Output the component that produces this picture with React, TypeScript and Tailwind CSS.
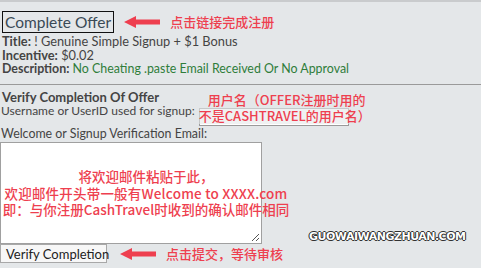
import React from "react";

const Arrow = () => (
  <svg width="38" height="12" viewBox="0 0 38 12" className="block">
    <polygon points="0,6 12,0 12,3.5 36,3.5 36,8.5 12,8.5 12,12" fill="#ee3f4f" />
  </svg>
);

export default function App() {
  const sans = { fontFamily: 'Lato, "Noto Sans", sans-serif' };
  const cjk = { fontFamily: '"Noto Sans CJK SC", "Noto Sans", sans-serif' };
  return (
    <div className="relative w-[481px] h-[268px] overflow-hidden bg-[#e4e7e9] text-[#444]" style={sans}>
      <div className="h-[2px] bg-[#c9cbcd]" />
      <div className="pl-[2px] pt-[9px]">
        <div className="flex items-center">
          <span className="border border-[#111] px-[2px] text-[15.5px] leading-[20px] text-[#3a4a56]">Complete Offer</span>
          <div className="ml-[10px] flex items-center gap-[8px]">
            <Arrow />
            <span className="text-[13px] leading-[16px] font-medium text-[#ee3f4f]" style={cjk}>点击链接完成注册</span>
          </div>
        </div>
        <div className="text-[12.8px] leading-[14px] mt-[1px]">
          <div><b className="font-bold">Title:</b> ! Genuine Simple Signup + $1 Bonus</div>
          <div><b className="font-bold">Incentive:</b> $0.02</div>
          <div className="text-[12.4px]"><b className="font-bold">Description:</b> <span className="text-[#2f7d3a]">No Cheating .paste Email Received Or No Approval</span></div>
        </div>
      </div>
      <div className="mt-[8px] border-t border-[#9a9a9a]" />
      <div className="pt-[5px] text-[13px] leading-[14px]">
        <div className="pl-[2px] font-bold">Verify Completion Of Offer</div>
        <div className="pl-[1px] flex items-start h-[22px]">
          <span className="text-[12px]">Username or UserID used for signup:</span>
          <div className="relative ml-[4px] mt-[4px] w-[150px] h-[18px] bg-white border border-[#9a9a9a]">
            <div className="absolute left-[-1px] top-[-17px] whitespace-nowrap text-[13px] leading-[16px] font-medium text-[#ee3f4f] bg-[#e4e7e9]/60" style={cjk}>
              <div className="pl-[9px]">用户名（OFFER注册时用的</div>
              <div>不是CASHTRAVEL的用户名）</div>
            </div>
          </div>
        </div>
        <div className="pl-[1px] mt-[1px] text-[12.4px]">Welcome or Signup Verification Email:</div>
        <div className="relative w-[262px] h-[102px] bg-white border border-[#a0a0a0] mt-[1px]">
          <svg className="absolute right-[1px] bottom-[1px]" width="9" height="9" viewBox="0 0 9 9">
            <line x1="1" y1="8" x2="8" y2="1" stroke="#555" strokeWidth="1" />
            <line x1="5" y1="8" x2="8" y2="5" stroke="#555" strokeWidth="1" />
          </svg>
          <div className="absolute left-[1px] top-[25px] w-[288px] text-center whitespace-nowrap text-[13.5px] leading-[16.5px] font-medium text-[#ee3f4f]" style={cjk}>
            <div>将欢迎邮件粘贴于此，</div>
            <div className="tracking-[0.2px]">欢迎邮件开头带一般有Welcome to XXXX.com</div>
            <div>即：与你注册CashTravel时收到的确认邮件相同</div>
          </div>
        </div>
        <div className="flex items-center">
          <button className="h-[19px] w-[107px] whitespace-nowrap bg-[#f7f7f7] border border-[#a8a8a8] text-[13px] leading-[16px] text-[#222] px-[5px] text-left" style={sans}>
            Verify Completion
          </button>
          <div className="ml-[13px] flex items-center gap-[8px]">
            <Arrow />
            <span className="text-[13px] leading-[16px] font-medium text-[#ee3f4f]" style={cjk}>点击提交，等待审核</span>
          </div>
        </div>
        <div className="mt-[6px] border-t border-[#9a9a9a]" />
      </div>
      <div
        className="absolute left-[309px] top-[230px] text-[11px] leading-[14px] font-bold text-white tracking-[-0.5px]"
        style={{ fontFamily: '"DejaVu Sans", sans-serif', textShadow: "0 0 1px #222, 1px 0 0 #333, -1px 0 0 #333, 0 1px 0 #333, 0 -1px 0 #333" }}
      >
        GUOWAIWANGZHUAN.COM
      </div>
    </div>
  );
}
